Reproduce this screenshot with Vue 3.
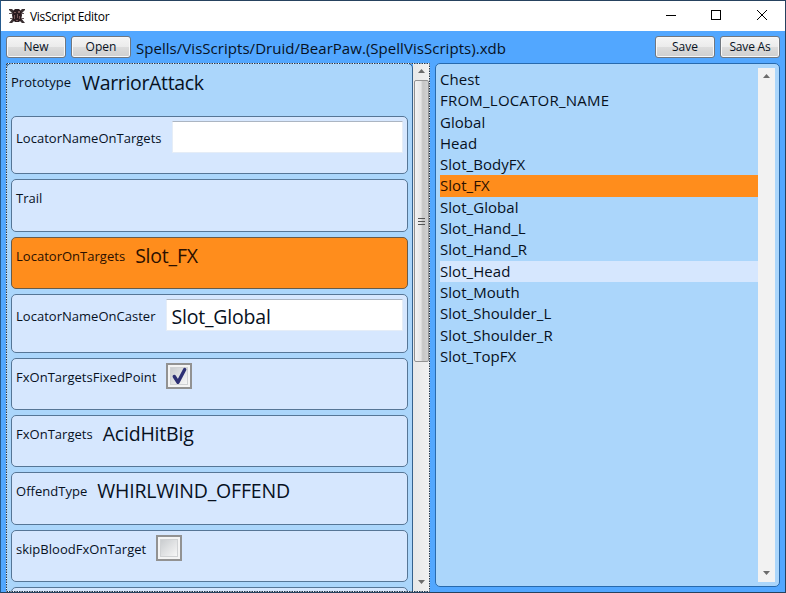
<script setup>
const fields = [
  { name: 'LocatorNameOnTargets', kind: 'input', value: '', height: 58 },
  { name: 'Trail', kind: 'text', value: '', height: 53 },
  { name: 'LocatorOnTargets', kind: 'text', value: 'Slot_FX', height: 52, active: true },
  { name: 'LocatorNameOnCaster', kind: 'input', value: 'Slot_Global', height: 59 },
  { name: 'FxOnTargetsFixedPoint', kind: 'check', value: true, height: 52 },
  { name: 'FxOnTargets', kind: 'text', value: 'AcidHitBig', height: 52 },
  { name: 'OffendType', kind: 'text', value: 'WHIRLWIND_OFFEND', height: 53 },
  { name: 'skipBloodFxOnTarget', kind: 'check', value: false, height: 52 },
]
const locators = ['Chest', 'FROM_LOCATOR_NAME', 'Global', 'Head', 'Slot_BodyFX', 'Slot_FX', 'Slot_Global', 'Slot_Hand_L', 'Slot_Hand_R', 'Slot_Head', 'Slot_Mouth', 'Slot_Shoulder_L', 'Slot_Shoulder_R', 'Slot_TopFX']
</script>

<template>
  <div class="window">
    <header class="titlebar">
      <svg class="app-icon" width="16" height="16" viewBox="0 0 16 16">
        <path d="M0 1h3l3 3-2 2-4-4zM16 1h-3l-3 3 2 2 4-4zM0 15l4-5 2 2-3 3zM16 15l-4-5-2 2 3 3z" fill="#3a3032" />
        <path d="M4 3l2-2h4l2 2 1 4-1 5-2 2H6l-2-2-1-5z" fill="#2b1c20" />
        <path d="M5 4h2v1H5zM9 3h2v2H9zM5 7h1v4H5zM8 6h1v4H8zM10 8h1v3h-1zM7 12h2v1H7z" fill="#795a5b" />
        <path d="M0 5.500h3M13 5.500h2M1 10.500h3M12 10.500h3" stroke="#66575a" />
      </svg>
      <span class="title">VisScript Editor</span>
      <svg class="controls" width="110" height="16" viewBox="0 0 110 16" fill="none" stroke="#000">
        <path d="M3 7.500h10M48.500 2.500h9v9h-9z" shape-rendering="crispEdges" />
        <path d="M94 2l10 10M104 2L94 12" />
      </svg>
    </header>

    <div class="toolbar">
      <button>New</button>
      <button>Open</button>
      <span class="path">Spells/VisScripts/Druid/BearPaw.(SpellVisScripts).xdb</span>
      <button>Save</button>
      <button class="save-as">Save As</button>
    </div>

    <main class="body">
      <section class="props">
        <div class="props-content">
          <div class="proto"><span class="label">Prototype</span><span class="value">WarriorAttack</span></div>
          <div v-for="f in fields" :key="f.name" class="card" :class="[f.kind, { active: f.active }]" :style="{ height: f.height + 'px' }">
            <span class="label">{{ f.name }}</span>
            <div v-if="f.kind === 'input'" class="field">{{ f.value }}</div>
            <span v-else-if="f.kind === 'text'" class="value">{{ f.value }}</span>
            <span v-else class="box">
              <svg width="26" height="26" viewBox="0 0 26 26">
                <defs>
                  <linearGradient id="box" x1="0" y1="0" x2="1" y2="1">
                    <stop offset="0" stop-color="#c8cbce" /><stop offset="1" stop-color="#f8f8f8" />
                  </linearGradient>
                </defs>
                <rect x="1" y="1" width="24" height="24" fill="#f4f4f4" stroke="#929292" stroke-width="2" />
                <rect x="4.500" y="4.500" width="17" height="17" fill="url(#box)" stroke="#d0d2d4" />
                <path v-if="f.value" d="M8.300 13.500L12 19.200L18.700 6.500" fill="none" stroke="#2d3074" stroke-width="3.400" stroke-linecap="round" stroke-linejoin="round" />
              </svg>
            </span>
          </div>
          <div class="card last"></div>
        </div>
        <div class="scroll">
          <svg class="arrow" width="7" height="4" viewBox="0 0 7 4"><path d="M0 4L3.500 0L7 4z" /></svg>
          <div class="thumb"><i></i><i></i><i></i></div>
          <svg class="arrow down" width="7" height="4" viewBox="0 0 7 4"><path d="M0 0h7L3.500 4z" /></svg>
        </div>
        <svg class="focus" width="424" height="529" viewBox="0 0 424 529" fill="none">
          <rect x=".5" y=".5" width="423" height="528" stroke="#eef3f8" />
          <rect x=".5" y=".5" width="423" height="528" stroke="#26384c" stroke-dasharray="1.500 1" />
        </svg>
      </section>

      <section class="locators">
        <ul>
          <li v-for="l in locators" :key="l" :class="{ selected: l === 'Slot_FX', hover: l === 'Slot_Head', caps: l === 'FROM_LOCATOR_NAME' }">{{ l }}</li>
        </ul>
        <div class="list-scroll">
          <svg class="arrow" width="7" height="4" viewBox="0 0 7 4"><path d="M0 4L3.500 0L7 4z" /></svg>
          <svg class="arrow" width="7" height="4" viewBox="0 0 7 4"><path d="M0 0h7L3.500 4z" /></svg>
        </div>
      </section>
    </main>
  </div>
</template>

<style>
body { overflow: hidden; }
</style>
<style scoped>
* { box-sizing: border-box; }
.window {
  width: 786px; height: 593px; display: flex; flex-direction: column; overflow: hidden;
  background: #52a7ff; border: 1px solid #26425f; border-left-color: #255a8d;
  font-family: "Open Sans", "Noto Sans", sans-serif; color: #07111e; white-space: nowrap;
}
.titlebar { height: 30px; flex: none; background: #fff; display: flex; align-items: center; padding: 0 12px 0 8px; color: #000; }
.app-icon { margin-right: 5px; }
.title { font-size: 12px; letter-spacing: -.32px; }
.controls { margin-left: auto; }
.toolbar { height: 32px; flex: none; display: flex; align-items: center; padding: 0 5px; gap: 5px; }
button {
  width: 60px; height: 22px; flex: none; padding: 0; border: 1px solid #707780; border-radius: 3px;
  font: 12px/20px "Open Sans", sans-serif; color: #07111e;
  background: linear-gradient(#f5f5f5, #ebebeb 50%, #dcdcdc 51%, #cfcfcf); box-shadow: inset 0 0 0 1px #f8f8f8;
}
.save-as { letter-spacing: -.2px; }
.path { flex: 1; font-size: 15px; letter-spacing: .04px; padding-top: 1px; }
.body { flex: 1; min-height: 0; display: flex; gap: 5px; padding: 0 5px; }
.props { width: 424px; height: 529px; position: relative; display: flex; overflow: hidden; }
.focus { position: absolute; left: 0; top: 0; }
.props-content {
  width: 407px; height: 540px; flex: none; display: flex; flex-direction: column; gap: 5px; padding: 0 4px;
  background: #abd6fb; border: 1px solid #35618c; border-radius: 5px;
}
.proto { height: 47px; flex: none; display: flex; align-items: flex-start; }
.label { font-size: 13px; line-height: 18px; letter-spacing: .02px; padding-top: 9px; }
.input .label { padding-top: 12px; }
.value { font-size: 19.500px; line-height: 28px; letter-spacing: -.2px; margin-left: 10px; padding-top: 4px; }
.proto .value { letter-spacing: -.33px; margin-left: 11px; padding-top: 5px; }
.card { flex: none; display: flex; align-items: flex-start; background: #d6e7fe; border: 1px solid #567696; border-radius: 5px; padding: 0 4px; }
.card.active { background: #ff8d1c; border-color: #665b4c; color: #2b1000; }
.card.last { height: 52px; }
.field {
  flex: 1; height: 32px; margin: 4px 0 0 10px; padding-left: 5px; background: #fff; border: 1px solid #e5edf7;
  border-top-color: #abb5c2; font-size: 19.500px; line-height: 34px; letter-spacing: -.2px;
}
.box { margin: 4px 0 0 10px; height: 26px; }
.box svg { display: block; }
.scroll {
  width: 17px; height: 529px; background: linear-gradient(90deg, #e8e8e8, #f1f1f1); padding: 6px 1px 8px;
  display: flex; flex-direction: column; align-items: center;
}
.arrow { flex: none; fill: #6c6c6c; }
.thumb {
  width: 15px; height: 282px; margin-top: 7px; border: 1px solid #929292; border-radius: 2px;
  background: linear-gradient(90deg, #f3f3f3, #e5e5e5 45%, #c5c5c5 60%, #d2d2d2);
  display: flex; flex-direction: column; align-items: center; justify-content: center; gap: 2px;
}
.thumb i { width: 7px; height: 1px; background: #555; }
.down { margin-top: auto; }
.locators { width: 345px; height: 524px; display: flex; background: #abd6fb; border: 1px solid #286aad; border-radius: 5px; padding: 4px; }
ul { list-style: none; margin: 0; padding: 1px 0 0; width: 318px; }
li { height: 21.300px; font-size: 15px; line-height: 21.300px; letter-spacing: .05px; }
.caps { letter-spacing: .22px; }
.selected { background: #ff8d1c; color: #2b1000; }
.hover { background: #d6e7fe; }
.list-scroll { width: 17px; background: #f2f2f2; padding: 6px 0 7px; display: flex; flex-direction: column; justify-content: space-between; align-items: center; }
</style>
